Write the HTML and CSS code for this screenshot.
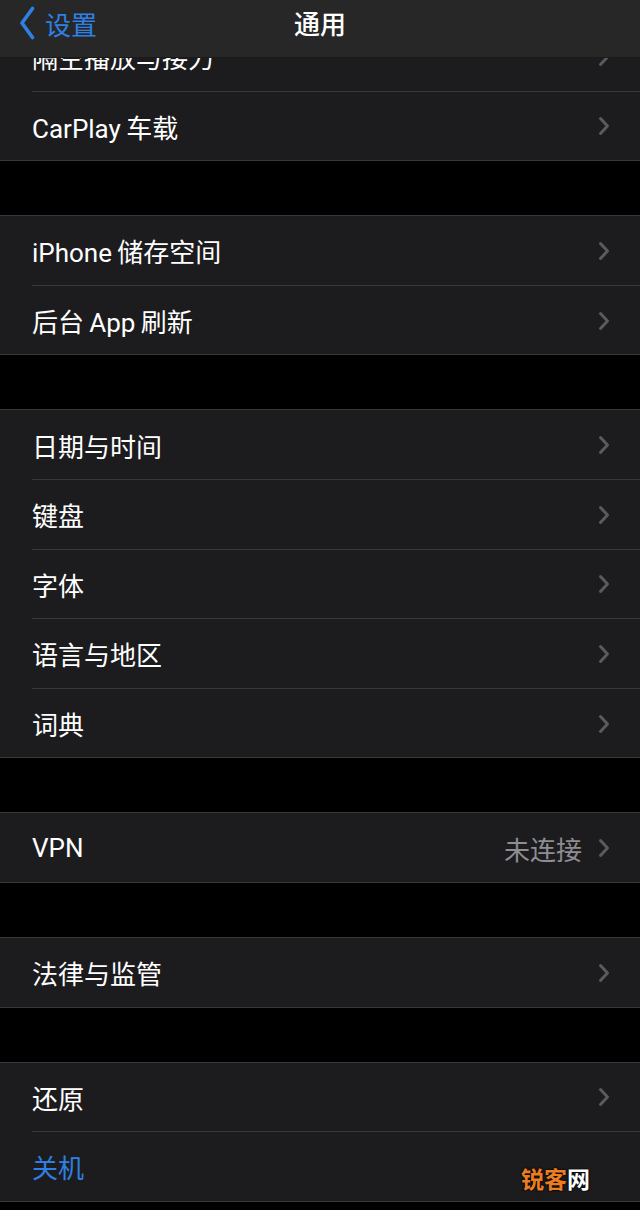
FILE: index.html
```html
<!DOCTYPE html>
<html lang="zh-CN">
<head>
    <meta charset="utf-8">
    <title>通用</title>
    <link rel="stylesheet" href="styles.css">
</head>
<body>
    <nav class="navbar">
        <a class="back" href="#">
            <svg class="back-icon" width="16" height="34" viewBox="0 0 16 34"><path d="M13.5 2.5 L3 17 L13.5 31.5" fill="none" stroke="#2f80e4" stroke-width="3.6" stroke-linecap="round" stroke-linejoin="round"/></svg>
            <span>设置</span>
        </a>
        <h1 class="title">通用</h1>
        <div></div>
    </nav>

    <main class="list">
        <section class="group">
            <div class="row"><span class="label">隔空播放与接力</span><span class="chev"></span></div>
            <div class="row"><span class="label">CarPlay&thinsp;车载</span><span class="chev"></span></div>
        </section>

        <section class="group">
            <div class="row"><span class="label">iPhone&thinsp;储存空间</span><span class="chev"></span></div>
            <div class="row"><span class="label">后台&thinsp;App&thinsp;刷新</span><span class="chev"></span></div>
        </section>

        <section class="group">
            <div class="row"><span class="label">日期与时间</span><span class="chev"></span></div>
            <div class="row"><span class="label">键盘</span><span class="chev"></span></div>
            <div class="row"><span class="label">字体</span><span class="chev"></span></div>
            <div class="row"><span class="label">语言与地区</span><span class="chev"></span></div>
            <div class="row"><span class="label">词典</span><span class="chev"></span></div>
        </section>

        <section class="group">
            <div class="row"><span class="label">VPN</span><span class="value">未连接</span><span class="chev"></span></div>
        </section>

        <section class="group">
            <div class="row"><span class="label">法律与监管</span><span class="chev"></span></div>
        </section>

        <section class="group">
            <div class="row"><span class="label">还原</span><span class="chev"></span></div>
            <div class="row"><span class="label action">关机</span></div>
        </section>
    </main>

    <div class="watermark"><span class="wm-orange">锐客</span>网</div>

    <script>
        // same chevron for every row that has one
        const chevron = '<svg width="12" height="20" viewBox="0 0 12 20"><path d="M2.5 2.5 L9.5 10 L2.5 17.5" fill="none" stroke="#5b5b5f" stroke-width="3" stroke-linecap="round" stroke-linejoin="round"/></svg>';
        document.querySelectorAll('.chev').forEach(el => { el.innerHTML = chevron; });
    </script>
</body>
</html>
```

FILE: styles.css
```css
* { padding: 0; margin: 0; box-sizing: border-box; }
html { background-color: #000; }
body {
    font-family: Roboto, "Noto Sans CJK SC", sans-serif;
    color: #fff;
    width: 640px;
    min-height: 1210px;
    position: relative;
    overflow: hidden;
}
.navbar {
    position: absolute; /* sits over the scrolled list */
    top: 0;
    left: 0;
    right: 0;
    height: 58px;
    background-color: #272727;
    border-bottom: 1px solid #1a1a1a;
    display: grid;
    grid-template-columns: 1fr auto 1fr;
    align-items: center;
    z-index: 2;
}
.back {
    display: flex;
    align-items: center;
    gap: 10px;
    padding-left: 19px;
    color: #2f80e4;
    text-decoration: none;
    font-size: 26px;
    margin-top: -11px;
}
.title {
    font-size: 26px;
    font-weight: 500;
    margin-top: -13px;
}
.list {
    padding-top: 21px; /* scrolled a bit: first row half hidden */
}
.group {
    background-color: #1c1c1e;
    border-top: 1px solid #38383a;
    margin-top: 54px;
}
.group:first-child { margin-top: 0; }
.row {
    height: 69.6px;
    display: flex;
    align-items: center;
    padding: 0 30px 0 32px;
    font-size: 26px;
    position: relative;
}
.row::after {
    content: "";
    position: absolute;
    left: 32px;
    right: 0;
    bottom: 0;
    height: 1px;
    background-color: #38383a;
}
.row:last-child::after { left: 0; }
.label { flex: 1; }
.value {
    color: #8d8d92;
    margin-right: 16px;
}
.chev {
    display: flex;
    width: 12px;
    height: 20px;
}
.action { color: #2f80e4; }
.watermark {
    position: absolute; /* stamped over the last row */
    left: 521px;
    top: 1161px;
    font-size: 23px;
    font-weight: 700;
    color: #fff;
    text-shadow: 0 0 2px #000, 0 0 2px #000;
}
.wm-orange { color: #ec7d20; }
```
